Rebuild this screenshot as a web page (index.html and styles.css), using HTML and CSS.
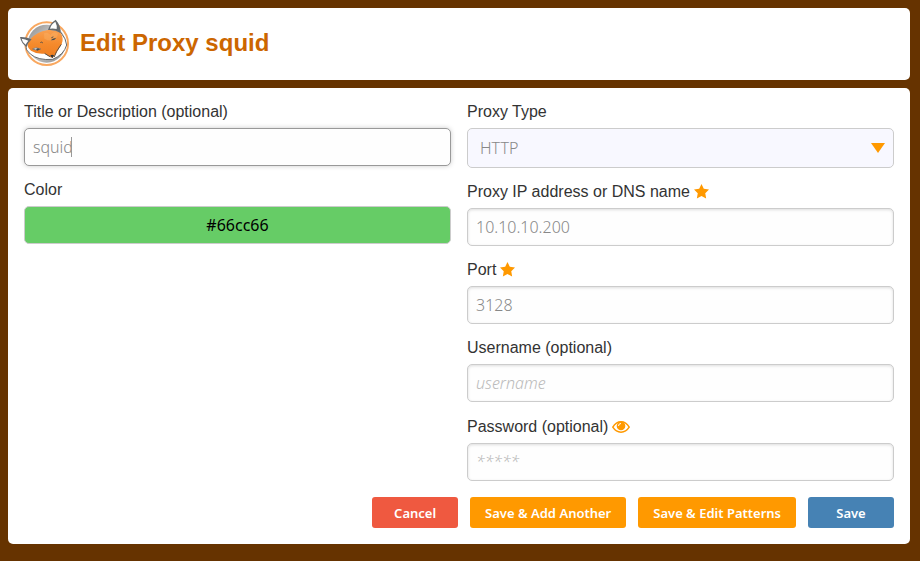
FILE: index.html
```html
<!DOCTYPE html>
<html lang="en">
<head>
<meta charset="utf-8">
<title>Edit Proxy squid</title>
<link rel="stylesheet" href="styles.css">
</head>
<body>
<header class="card header">
  <svg class="logo" viewBox="18 14 150 144" aria-hidden="true">
    <defs>
      <linearGradient id="disc" x1="0" y1="0" x2="1" y2="1">
        <stop offset="0" stop-color="#888"/><stop offset=".45" stop-color="#ccc"/><stop offset="1" stop-color="#888"/>
      </linearGradient>
      <linearGradient id="fur" x1="0" y1="0" x2="0" y2="1">
        <stop offset="0" stop-color="#f9a050"/><stop offset=".5" stop-color="#f58a2c"/><stop offset="1" stop-color="#ee7d20"/>
      </linearGradient>
    </defs>
    <circle cx="98" cy="88" r="64" fill="#fff" stroke="#f9a860" stroke-width="6"/>
    <circle cx="98" cy="88" r="57" fill="url(#disc)"/>
    <path d="M35 92Q34 108 49 119Q72 139 116 135Q150 121 158 92Q157 74 140 54L100 58L48 78Z" fill="#fff" stroke="#66696c" stroke-width="3" stroke-linejoin="round"/>
    <path d="M45 78Q66 52 102 47Q124 45 140 55Q150 72 143 90L131 109Q125 122 115 131Q105 127 93 118Q70 121 51 109Q34 97 45 78Z" fill="url(#fur)"/>
    <path d="M90 57Q100 52 109 62Q118 50 131 56Q133 70 119 77Q106 82 91 73Z" fill="#fbb36b" opacity=".4"/>
    <path d="M18 68Q35 67 53 75Q42 84 38 98Q22 88 18 68ZM125 16Q141 34 140 56Q123 45 102 47Q108 26 125 16Z" fill="#666a6e"/>
    <path d="M23 73Q34 74 43 79Q37 86 35 91Q25 85 23 73ZM108 43Q111 30 124 22Q130 34 128 44Q118 41 108 43Z" fill="#fff"/>
    <path d="M56 104Q65 97 80 104Q70 111 56 104Z" fill="#fff" stroke="#5a5d60" stroke-width="2"/>
    <path d="M66 104Q72 99 78 105L69 109ZM110 78Q114 72 127 70Q122 79 110 78Z" fill="#44484c"/>
    <path d="M80 84Q84 81 86 85M113 70L117 68M93 118L108 127M141 91L128 111L121 127" fill="none" stroke="#5a5148" stroke-width="3" stroke-linecap="round"/>
    <path d="M109 123Q115 120 120 123L116 131Q111 130 109 123Z" fill="#303438"/>
  </svg>
  <h1 class="title">Edit Proxy squid</h1>
</header>

<form class="card form">
  <div class="columns">
    <div class="column">
      <div class="field">
        <label class="label" for="title">Title or Description (optional)</label>
        <div class="control">
          <input class="input active" id="title" type="text" value="squid">
          <span class="caret"></span>
        </div>
      </div>
      <div class="field">
        <label class="label" for="color">Color</label>
        <input class="input color" id="color" type="text" value="#66cc66">
      </div>
    </div>
    <div class="column">
      <div class="field">
        <label class="label" for="type">Proxy Type</label>
        <div class="control select-wrap">
          <select class="select" id="type"><option>HTTP</option></select>
        </div>
      </div>
      <div class="field">
        <label class="label" for="address">Proxy IP address or DNS name
          <svg class="star" viewBox="0 0 15 16" aria-hidden="true"><path d="M7.500 0L9.800 4.800L15 5.600L11.250 9.300L12.150 14.600L7.500 12.100L2.850 14.600L3.750 9.300L0 5.600L5.200 4.800Z"/></svg>
        </label>
        <input class="input" id="address" type="text" value="10.10.10.200">
      </div>
      <div class="field">
        <label class="label" for="port">Port
          <svg class="star" viewBox="0 0 15 16" aria-hidden="true"><path d="M7.500 0L9.800 4.800L15 5.600L11.250 9.300L12.150 14.600L7.500 12.100L2.850 14.600L3.750 9.300L0 5.600L5.200 4.800Z"/></svg>
        </label>
        <input class="input" id="port" type="text" value="3128">
      </div>
      <div class="field">
        <label class="label" for="username">Username (optional)</label>
        <input class="input" id="username" type="text" placeholder="username">
      </div>
      <div class="field">
        <label class="label label-toggle" for="password">Password (optional)
          <svg class="eye" viewBox="0 0 18 12" aria-hidden="true"><path class="eye-line" d="M.8 6.200Q4 .8 9 .8T17.200 6.200Q14 11.200 9 11.200T.8 6.200Z"/><circle cx="9" cy="4.900" r="4.300"/><path class="eye-glint" d="M6.500 5Q6.500 2.500 9 2.500"/></svg>
        </label>
        <input class="input" id="password" type="password" placeholder="*****">
      </div>
    </div>
  </div>
  <div class="actions">
    <button class="button cancel" type="button">Cancel</button>
    <button class="button" type="button">Save &amp; Add Another</button>
    <button class="button" type="button">Save &amp; Edit Patterns</button>
    <button class="button save" type="submit">Save</button>
  </div>
</form>
</body>
</html>
```
FILE: styles.css
```css
* {
  box-sizing: border-box;
}

body {
  margin: 8px 10px 8px 8px;
  background: #630;
  color: #333;
  font: 16px/24px "Liberation Sans", Arial, sans-serif;
}

.card {
  background: #fff;
  border-radius: 5px;
}

.header {
  display: flex;
  align-items: center;
  gap: 10px;
  margin-bottom: 8px;
  padding: 11px 12px 13px;
}

.logo {
  width: 50px;
  height: 48px;
}

.title {
  margin: 0;
  color: #c60;
  font-size: 24px;
  line-height: 32px;
}

.form {
  padding: 16px;
}

.columns {
  display: grid;
  grid-template-columns: 1fr 1fr;
  gap: 16px;
}

.column {
  display: flex;
  flex-direction: column;
  gap: 16px;
}

.label {
  display: flex;
  align-items: center;
  gap: 4px;
  height: 24px;
  padding-bottom: 8px;
}

.label-toggle {
  height: 25px;
  padding-bottom: 7px;
}

.control {
  position: relative;
}

.input,
.select {
  display: block;
  width: 100%;
  height: 38px;
  margin: 0;
  padding: 0 8px;
  border: 1px solid #ccc;
  border-radius: 5px;
  outline: 0;
  background: #fefefe;
  box-shadow: inset 0 1px 3px #ddd;
  color: #888;
  font: 300 16px "Noto Sans", sans-serif;
}

.input::placeholder {
  color: #bbb;
  font-style: italic;
  opacity: 1;
}

.active {
  border-color: #999;
  box-shadow: 0 0 5px #ccc;
}

.caret {
  position: absolute;
  top: 9px;
  left: 47px;
  width: 1px;
  height: 20px;
  background: #999;
}

.color {
  background: #6c6;
  box-shadow: none;
  color: #000;
  font-weight: 400;
  text-align: center;
}

.select {
  height: 40px;
  padding: 0 12px;
  appearance: none;
  background: #f8f8ff;
  box-shadow: none;
}

.select-wrap::after {
  content: "";
  position: absolute;
  top: 15px;
  right: 9px;
  width: 14px;
  height: 10px;
  background: #f90;
  clip-path: polygon(0 0, 100% 0, 50% 100%);
  pointer-events: none;
}

.star {
  width: 15px;
  height: 16px;
  fill: #f90;
}

.eye {
  width: 18px;
  height: 12px;
  fill: #f90;
}

.eye-line {
  fill: none;
  stroke: #f90;
  stroke-width: 1.5;
}

.eye-glint {
  fill: none;
  stroke: #fff;
  stroke-width: 1;
}

.actions {
  display: flex;
  justify-content: flex-end;
  gap: 12px;
  margin-top: 16px;
}

.button {
  min-width: 86px;
  height: 31px;
  padding: 0 15px;
  border: 0;
  border-radius: 3px;
  background: #f90;
  color: #fff;
  font: 600 13px "Noto Sans", sans-serif;
}

.cancel {
  background: #ef5940;
}

.save {
  background: #4682b4;
}
```
